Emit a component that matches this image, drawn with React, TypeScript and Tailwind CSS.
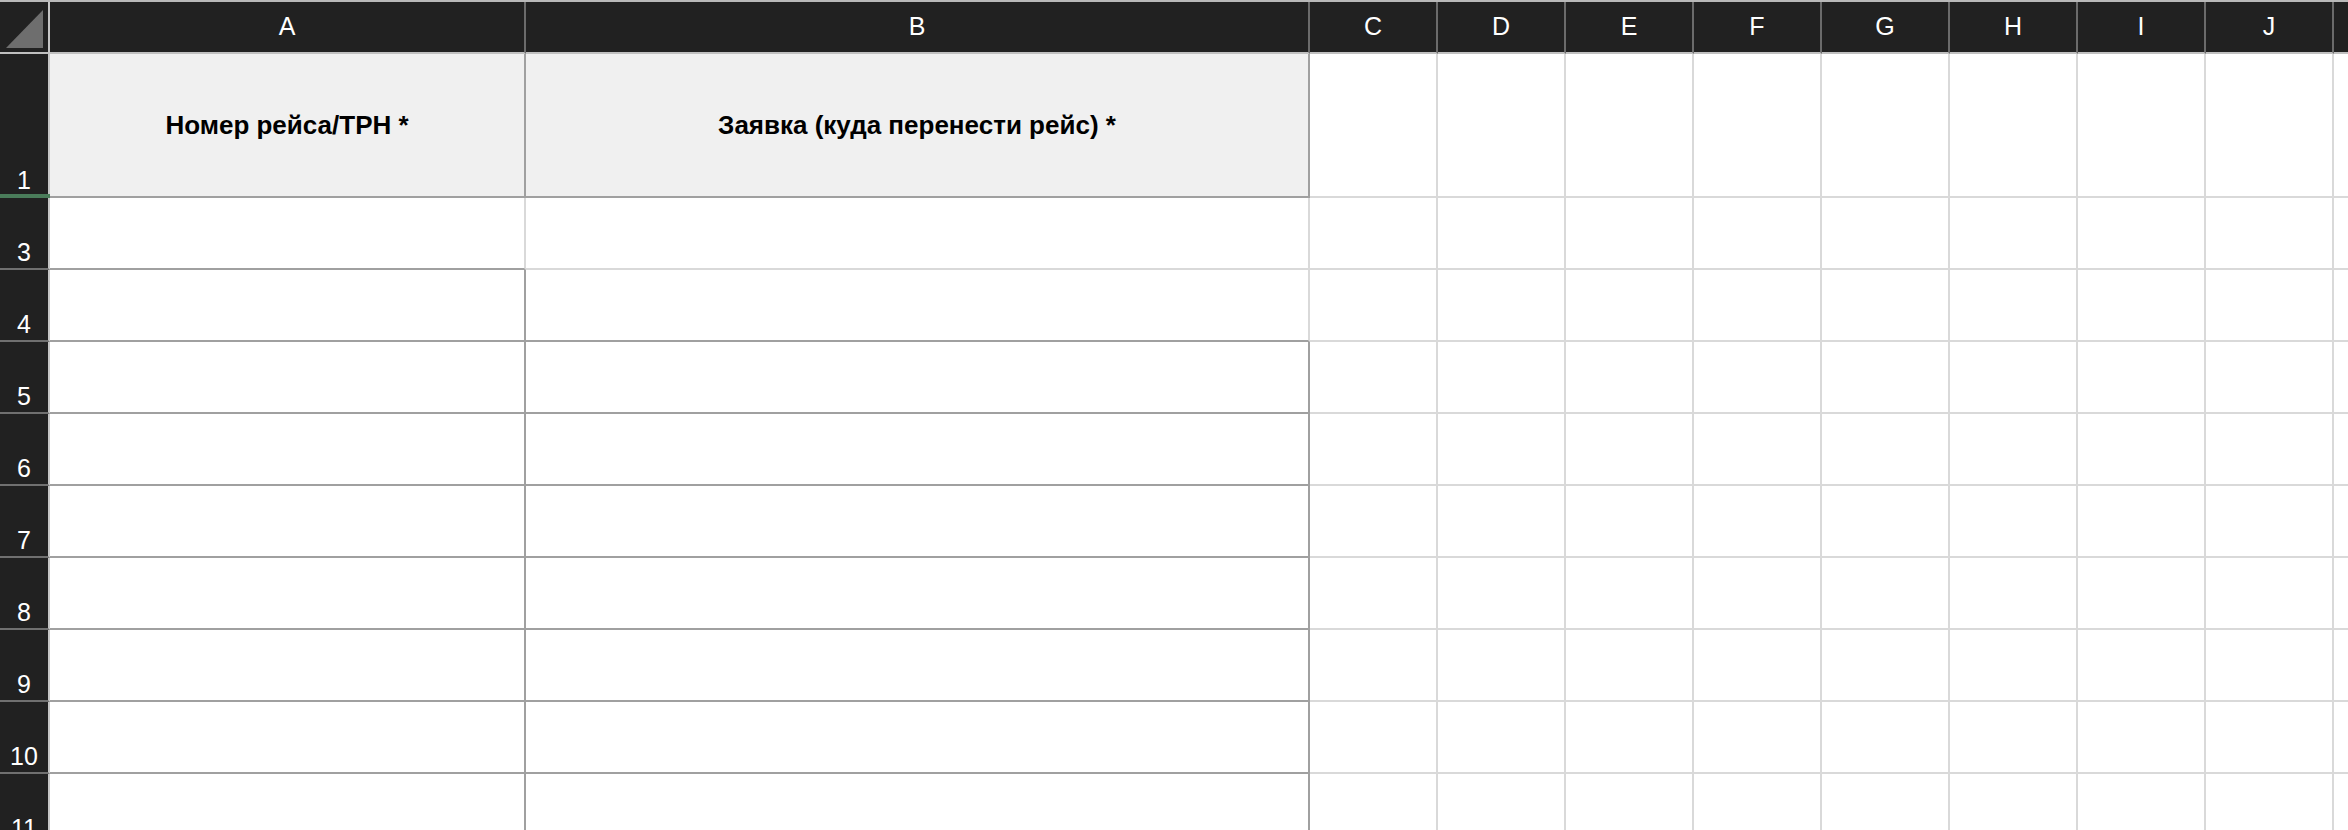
const letters = ["C", "D", "E", "F", "G", "H", "I", "J"]

type Row = { num: string; tall?: boolean; aR: boolean; aB: boolean; bR: boolean; bB: boolean }

const rows: Row[] = [
    { num: "1", tall: true, aR: true, aB: true, bR: true, bB: true },
    { num: "3", aR: false, aB: true, bR: false, bB: false },
    { num: "4", aR: true, aB: true, bR: false, bB: true },
    { num: "5", aR: true, aB: true, bR: true, bB: true },
    { num: "6", aR: true, aB: true, bR: true, bB: true },
    { num: "7", aR: true, aB: true, bR: true, bB: true },
    { num: "8", aR: true, aB: true, bR: true, bB: true },
    { num: "9", aR: true, aB: true, bR: true, bB: true },
    { num: "10", aR: true, aB: true, bR: true, bB: true },
    { num: "11", aR: true, aB: true, bR: true, bB: true },
]

// dark = border set on the cell, light = plain gridline
function cellBorder(r: boolean, b: boolean) {
    return `${r ? "border-r-[#a0a0a0]" : "border-r-[#d9d9d9]"} ${b ? "border-b-[#a0a0a0]" : "border-b-[#d9d9d9]"}`
}

export default function App() {
    return (
        <div className="h-[830px] w-full overflow-hidden bg-white font-['Liberation_Sans',Arial,sans-serif]">
            {/* column header */}
            <div className="flex h-[54px] border-t-2 border-[#b9b9b9] bg-[#212121] text-white text-[25px]">
                <div className="relative w-[50px] shrink-0 border-r-2 border-b-2 border-r-[#c6c6c6] border-b-[#c0c0c0]">
                    <svg className="absolute left-0 top-0" width="48" height="50" viewBox="0 0 48 50">
                        <polygon points="43,8 43,46 6,46" fill="#6e6e6e" />
                    </svg>
                </div>
                <div className="flex w-[476px] shrink-0 items-center justify-center border-r-2 border-b-2 border-r-[#6b6b6b] border-b-[#c0c0c0]">A</div>
                <div className="flex w-[784px] shrink-0 items-center justify-center border-r-2 border-b-2 border-r-[#6b6b6b] border-b-[#c0c0c0]">B</div>
                {letters.map((l) => (
                    <div key={l} className="flex w-[128px] shrink-0 items-center justify-center border-r-2 border-b-2 border-r-[#6b6b6b] border-b-[#c0c0c0]">
                        {l}
                    </div>
                ))}
                <div className="flex-1 border-b-2 border-b-[#c0c0c0]" />
            </div>

            {rows.map((row) => (
                <div key={row.num} className={`flex ${row.tall ? "h-[144px]" : "h-[72px]"}`}>
                    <div className="relative flex w-[50px] shrink-0 items-end justify-center border-r-2 border-b-2 border-r-[#c6c6c6] border-b-[#707070] bg-[#212121] pb-[3px] text-[25px] leading-none text-white">
                        {row.num}
                        {row.tall && <div className="absolute -bottom-[4px] left-0 h-[6px] w-[50px] bg-[#4a7c5a]" />}
                    </div>
                    <div className={`flex w-[476px] shrink-0 items-center justify-center border-r-2 border-b-2 ${cellBorder(row.aR, row.aB)} ${row.tall ? "bg-[#f0f0f0]" : "bg-white"}`}>
                        {row.tall && <span className="text-[26px] font-bold text-black">Номер рейса/ТРН *</span>}
                    </div>
                    <div className={`flex w-[784px] shrink-0 items-center justify-center border-r-2 border-b-2 ${cellBorder(row.bR, row.bB)} ${row.tall ? "bg-[#f0f0f0]" : "bg-white"}`}>
                        {row.tall && <span className="text-[26px] font-bold text-black">Заявка (куда перенести рейс) *</span>}
                    </div>
                    {letters.map((l) => (
                        <div key={l} className="w-[128px] shrink-0 border-r-2 border-b-2 border-r-[#d9d9d9] border-b-[#d9d9d9]" />
                    ))}
                    <div className="flex-1 border-b-2 border-b-[#d9d9d9]" />
                </div>
            ))}
        </div>
    )
}
